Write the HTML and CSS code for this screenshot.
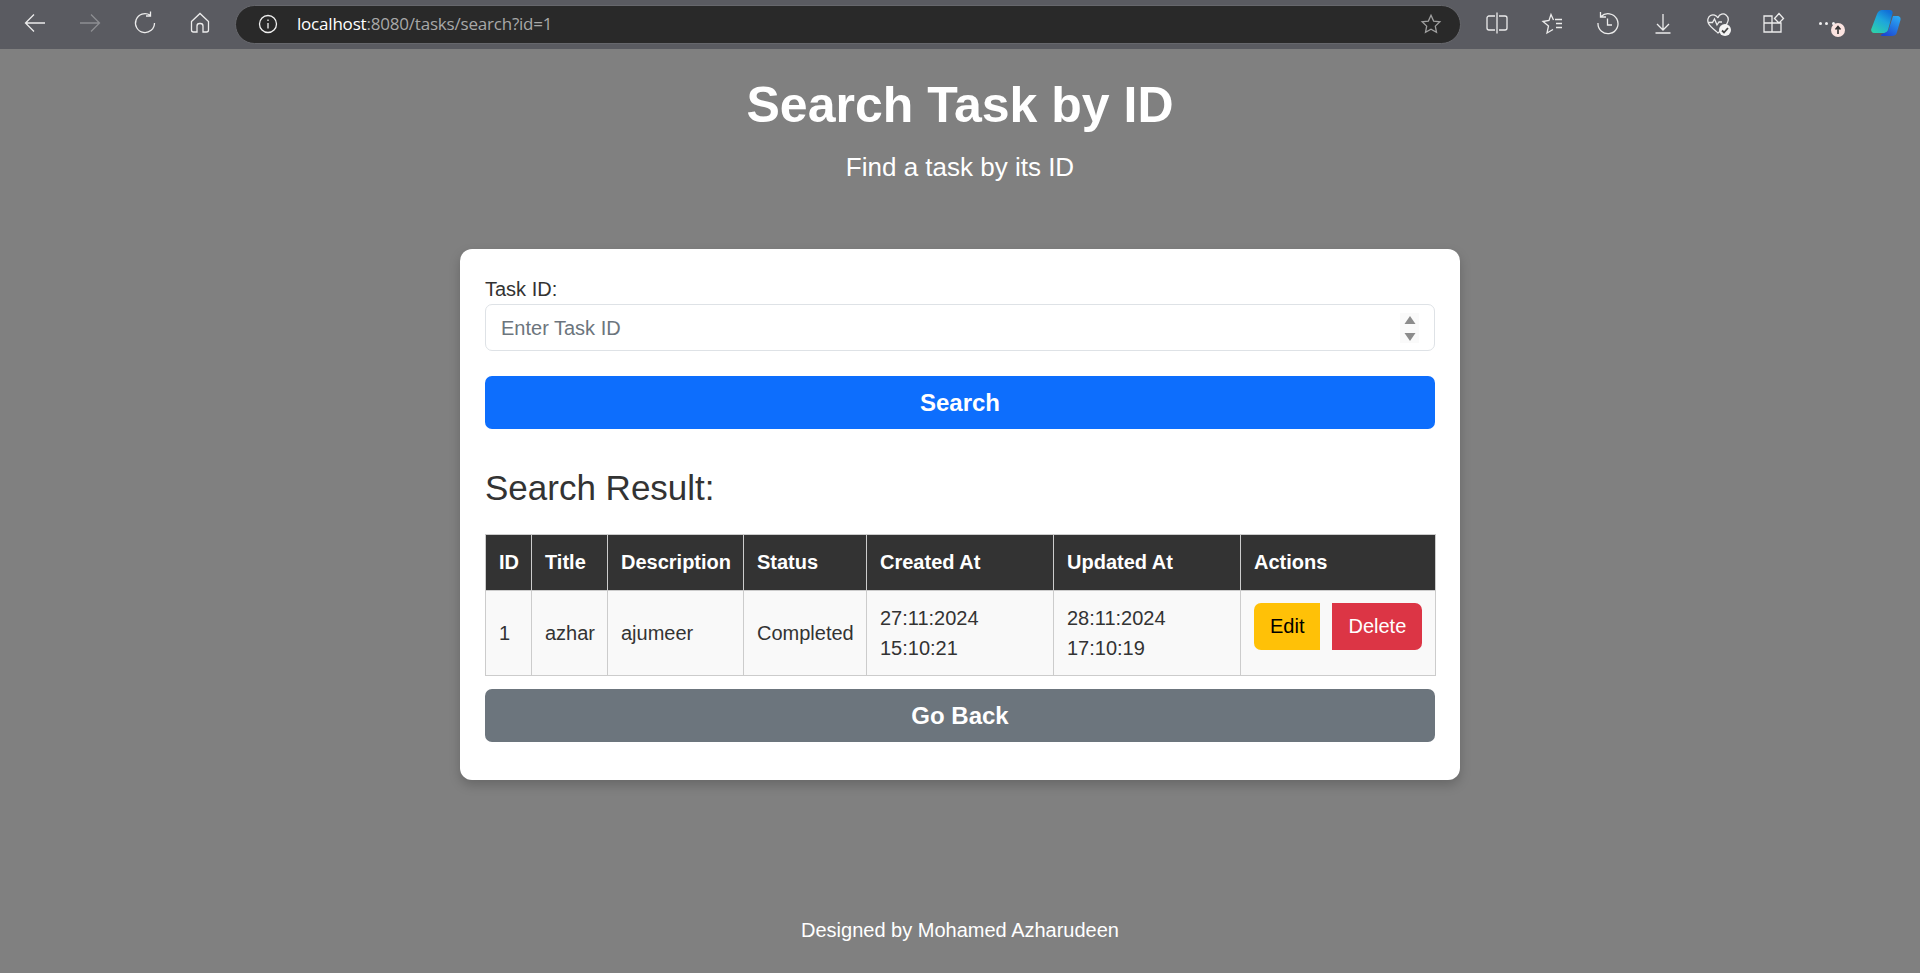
FILE: index.html
```html
<!DOCTYPE html>
<html lang="en">
<head>
    <meta charset="UTF-8">
    <title>Search Task by ID</title>
    <link rel="stylesheet" href="styles.css">
</head>
<body>
    <div class="toolbar">
        <div class="nav-icons">
            <svg class="icon" viewBox="0 0 24 24"><path d="M22 12H3M11 3.500 2.500 12l8.500 8.500"/></svg>
            <svg class="icon dim" viewBox="0 0 24 24"><path d="M2 12h19M13 3.500l8.500 8.500-8.500 8.500"/></svg>
            <svg class="icon" viewBox="0 0 24 24"><path d="M17 4A9.500 9.500 0 1 0 21.500 12M17.500 0.500V5H13"/></svg>
            <svg class="icon" viewBox="0 0 24 24"><path d="M3.500 10.500 12 2.500l8.500 8V19a2 2 0 0 1-2 2H15v-6a2.500 2.500 0 0 0-2.500-2.500h-1A2.500 2.500 0 0 0 9 15v6H5.500a2 2 0 0 1-2-2z"/></svg>
        </div>
        <div class="address">
            <svg class="info" viewBox="0 0 20 20"><circle cx="10" cy="10" r="8.500"/><path d="M10 9v5.500M10 5.500v1.500"/></svg>
            <span class="url"><b>localhost</b>:8080/tasks/search?id=1</span>
            <svg class="star" viewBox="0 0 24 24"><path d="M12 2.500l2.900 6.300 6.800.8-5 4.700 1.300 6.800-6-3.400-6 3.400 1.300-6.800-5-4.700 6.800-.8z"/></svg>
        </div>
        <div class="tool-icons">
            <svg class="icon" viewBox="0 0 24 24"><path d="M12 1.500v21M10 5H4a2 2 0 0 0-2 2v10a2 2 0 0 0 2 2h6M14 5h6a2 2 0 0 1 2 2v10a2 2 0 0 1-2 2h-6"/></svg>
            <svg class="icon" viewBox="0 0 24 24"><path d="M13 18.500 7 22l1.500-7L3 10.500l6-1 2-6 2.500 5.500M15 8.500h7M16 12.500h6M16 16.500h6"/></svg>
            <svg class="icon" viewBox="0 0 24 24"><path d="M5 5.500A10 10 0 1 1 2 12M4.500 1v5H10M11.500 7.500V14H16"/></svg>
            <svg class="icon" viewBox="0 0 24 24"><path d="M12 3v16M6 13l6 6 6-6M4.500 22h15"/></svg>
            <span class="badged">
                <svg class="icon" viewBox="0 0 24 24"><path d="M12 7C10.500 4 7 3 4.500 4.500S1 9.500 2.500 12.500 8 18.500 12 22c3.500-3 7-6 9-9.500s1.500-6.500-1-8.500-6.500-1-8 2.500zM2 11.500h4.500l2-3.500 2.500 6 2-3h3"/></svg>
                <span class="check"><svg viewBox="0 0 12 12"><path d="M3 6.500l2 2 4-4.500"/></svg></span>
            </span>
            <svg class="icon" viewBox="0 0 24 24"><path d="M3 5h8v7H3zM3 12h8v9H3zM11 12h9v9h-9zM13.500 7.500l4.500-5 4.500 5-4.500 4.500z"/></svg>
            <span class="badged">
                <span class="dots"><i></i><i></i><i></i></span>
                <span class="update"><svg viewBox="0 0 14 14"><path d="M7 11V4M4.500 6.500 7 3.500l2.500 3"/></svg></span>
            </span>
            <svg class="copilot" viewBox="0 0 30 26">
                <defs>
                    <linearGradient id="cg1" x1="0.1" y1="1" x2="0.7" y2="0"><stop offset="0" stop-color="#2ed3a8"/><stop offset="0.6" stop-color="#1ea6dc"/><stop offset="1" stop-color="#1170d8"/></linearGradient>
                    <linearGradient id="cg2" x1="0.8" y1="0" x2="0.2" y2="1"><stop offset="0" stop-color="#2aa8f4"/><stop offset="1" stop-color="#1c46d0"/></linearGradient>
                </defs>
                <path fill="url(#cg1)" d="M11 0h8c2 0 3 1.500 2.500 3.500L17 20c-.5 2-2 3-4 3H3c-2.200 0-3.300-2-2.700-4L6 4c1-2.500 3-4 5-4z"/>
                <path fill="url(#cg2)" d="M22 6h4c3 0 4 2 3.500 4L26 22c-.5 3-3 4-5 4H11c-2 0-1-1.500 1-2.500 3-1 5-2 6-5z"/>
            </svg>
        </div>
    </div>

    <header class="page-head">
        <h1>Search Task by ID</h1>
        <p>Find a task by its ID</p>
    </header>

    <main class="card">
        <form action="#">
            <label for="task_id">Task ID:</label>
            <div class="number-input">
                <input type="text" id="task_id" placeholder="Enter Task ID">
                <span class="spinner">
                    <svg viewBox="0 0 12 30"><path d="M6 3l5.500 8H.500zM6 28 .500 20h11z"/></svg>
                </span>
            </div>
            <button type="submit" class="btn-wide btn-blue">Search</button>
        </form>

        <h3>Search Result:</h3>

        <table>
            <colgroup>
                <col class="col-id">
                <col class="col-title">
                <col class="col-desc">
                <col class="col-status">
                <col class="col-date">
                <col class="col-date">
                <col class="col-actions">
            </colgroup>
            <thead>
                <tr>
                    <th>ID</th>
                    <th>Title</th>
                    <th>Description</th>
                    <th>Status</th>
                    <th>Created At</th>
                    <th>Updated At</th>
                    <th>Actions</th>
                </tr>
            </thead>
            <tbody>
                <tr>
                    <td>1</td>
                    <td>azhar</td>
                    <td>ajumeer</td>
                    <td>Completed</td>
                    <td>27:11:2024<br>15:10:21</td>
                    <td>28:11:2024<br>17:10:19</td>
                    <td class="actions">
                        <a href="#" class="btn-edit">Edit</a><a href="#" class="btn-delete">Delete</a>
                    </td>
                </tr>
            </tbody>
        </table>

        <button type="button" class="btn-wide btn-grey">Go Back</button>
    </main>

    <footer class="page-foot">Designed by Mohamed Azharudeen</footer>
</body>
</html>
```

FILE: styles.css
```css
* {
    box-sizing: border-box;
}

body {
    font-family: "Liberation Sans", Arial, sans-serif;
    font-size: 20px;
    line-height: 30px;
    margin: 0;
    height: 973px;
    overflow: hidden;
    background-color: #808080;
    color: #333;
    display: flex;
    flex-direction: column;
}

/* browser bar */
.toolbar {
    height: 49px;
    flex: none;
    background-color: #5a5b61;
    display: flex;
    align-items: center;
    padding-bottom: 1px;
}

.icon {
    display: block;
    width: 24px;
    height: 24px;
    fill: none;
    stroke: #ececec;
    stroke-width: 1.3;
    flex: none;
}

.icon.dim {
    stroke: #8d8e92;
}

.nav-icons {
    display: flex;
    gap: 31px;
    padding-left: 23px;
    margin-bottom: 2px;
    width: 235px;
    flex: none;
}

.address {
    width: 1226px;
    height: 39px;
    flex: none;
    background-color: #292929;
    border: 1px solid #66676c;
    border-radius: 20px;
    display: flex;
    align-items: center;
    padding: 0 18px 0 22px;
    font-family: "Open Sans", sans-serif;
    font-size: 17px;
    letter-spacing: -0.2px;
    color: #a8a8a8;
}

.address b {
    font-weight: 400;
    color: #fff;
}

.info {
    width: 20px;
    height: 20px;
    fill: none;
    stroke: #f0f0f0;
    stroke-width: 1.3;
    margin-right: 19px;
}

.url {
    flex: 1;
}

.star {
    width: 22px;
    height: 22px;
    fill: none;
    stroke: #a0a0a0;
    stroke-width: 1.4;
}

.tool-icons {
    display: flex;
    align-items: center;
    gap: 31.3px;
    padding-left: 24px;
    margin-bottom: 2px;
    flex: 1;
}

.badged {
    position: relative;
    display: block;
    width: 24px;
    height: 24px;
    flex: none;
}

.check {
    position: absolute;
    right: -1px;
    bottom: -1px;
    width: 12px;
    height: 12px;
    border-radius: 50%;
    background-color: #f4f4f4;
}

.check svg {
    display: block;
    fill: none;
    stroke: #444;
    stroke-width: 1.8;
}

.dots {
    display: flex;
    gap: 3.5px;
    padding: 11px 0 0 2px;
}

.dots i {
    width: 3px;
    height: 3px;
    border-radius: 50%;
    background-color: #f0f0f0;
}

.update {
    position: absolute;
    right: -4px;
    bottom: -2px;
    width: 14px;
    height: 14px;
    border-radius: 50%;
    background-color: #fbe3e0;
}

.update svg {
    display: block;
    fill: none;
    stroke: #333;
    stroke-width: 1.6;
}

.copilot {
    width: 30px;
    height: 26px;
    margin-left: -1px;
    flex: none;
}

/* page */
.page-head {
    text-align: center;
    color: #fff;
    padding-top: 28px;
    height: 200px;
    flex: none;
}

.page-head h1 {
    font-size: 50px;
    line-height: 56px;
    margin: 0;
}

.page-head p {
    font-size: 26px;
    line-height: 37px;
    margin: 16px 0 0;
}

.card {
    width: 1000px;
    height: 531px;
    flex: none;
    margin: 0 auto;
    padding: 25px;
    background-color: #fff;
    border-radius: 12px;
    box-shadow: 0 5px 12px rgba(0, 0, 0, 0.2);
}

label {
    display: block;
}

.number-input {
    position: relative;
    margin-bottom: 25px;
}

input[type="text"] {
    display: block;
    width: 100%;
    height: 47px;
    padding: 2px 15px 0;
    font: inherit;
    color: #212529;
    border: 1px solid #dee2e6;
    border-radius: 7px;
    outline: none;
}

input::placeholder {
    color: #6c757d;
}

.spinner {
    position: absolute;
    top: 9px;
    right: 16px;
    width: 19px;
    height: 30px;
    background-color: #fafafa;
    display: flex;
    justify-content: center;
}

.spinner svg {
    width: 12px;
    height: 30px;
    fill: #8c8c8c;
}

.btn-wide {
    display: block;
    width: 100%;
    height: 53px;
    border: none;
    border-radius: 7px;
    color: #fff;
    font-family: inherit;
    font-size: 24px;
    font-weight: bold;
}

.btn-blue {
    background-color: #0d6efd;
}

.btn-grey {
    background-color: #6c757d;
    margin-top: 13px;
}

h3 {
    font-size: 35px;
    font-weight: 400;
    line-height: 42px;
    margin: 38px 0 25px;
}

table {
    width: 950px;
    table-layout: fixed;
    border-collapse: collapse;
    background-color: #f9f9f9;
}

.col-id { width: 46px; }
.col-title { width: 76px; }
.col-desc { width: 136px; }
.col-status { width: 123px; }
.col-date { width: 187px; }
.col-actions { width: 195px; }

th,
td {
    padding: 12px 13px;
    border: 1px solid #ccc;
    text-align: left;
    white-space: nowrap;
}

th {
    background-color: #333;
    color: #fff;
    font-weight: bold;
    padding: 12px 13px 13px;
}

td.actions {
    vertical-align: top;
    padding-top: 12px;
}

.btn-edit,
.btn-delete {
    display: inline-block;
    height: 47px;
    line-height: 47px;
    padding: 0 16px;
    text-decoration: none;
}

.btn-edit {
    background-color: #ffc107;
    color: #000;
    border-radius: 7px 0 0 7px;
    margin-right: 12px;
}

.btn-delete {
    background-color: #dc3545;
    color: #fff;
    border-radius: 0 7px 7px 0;
}

.page-foot {
    color: #fff;
    text-align: center;
    padding-top: 135px;
}
```
